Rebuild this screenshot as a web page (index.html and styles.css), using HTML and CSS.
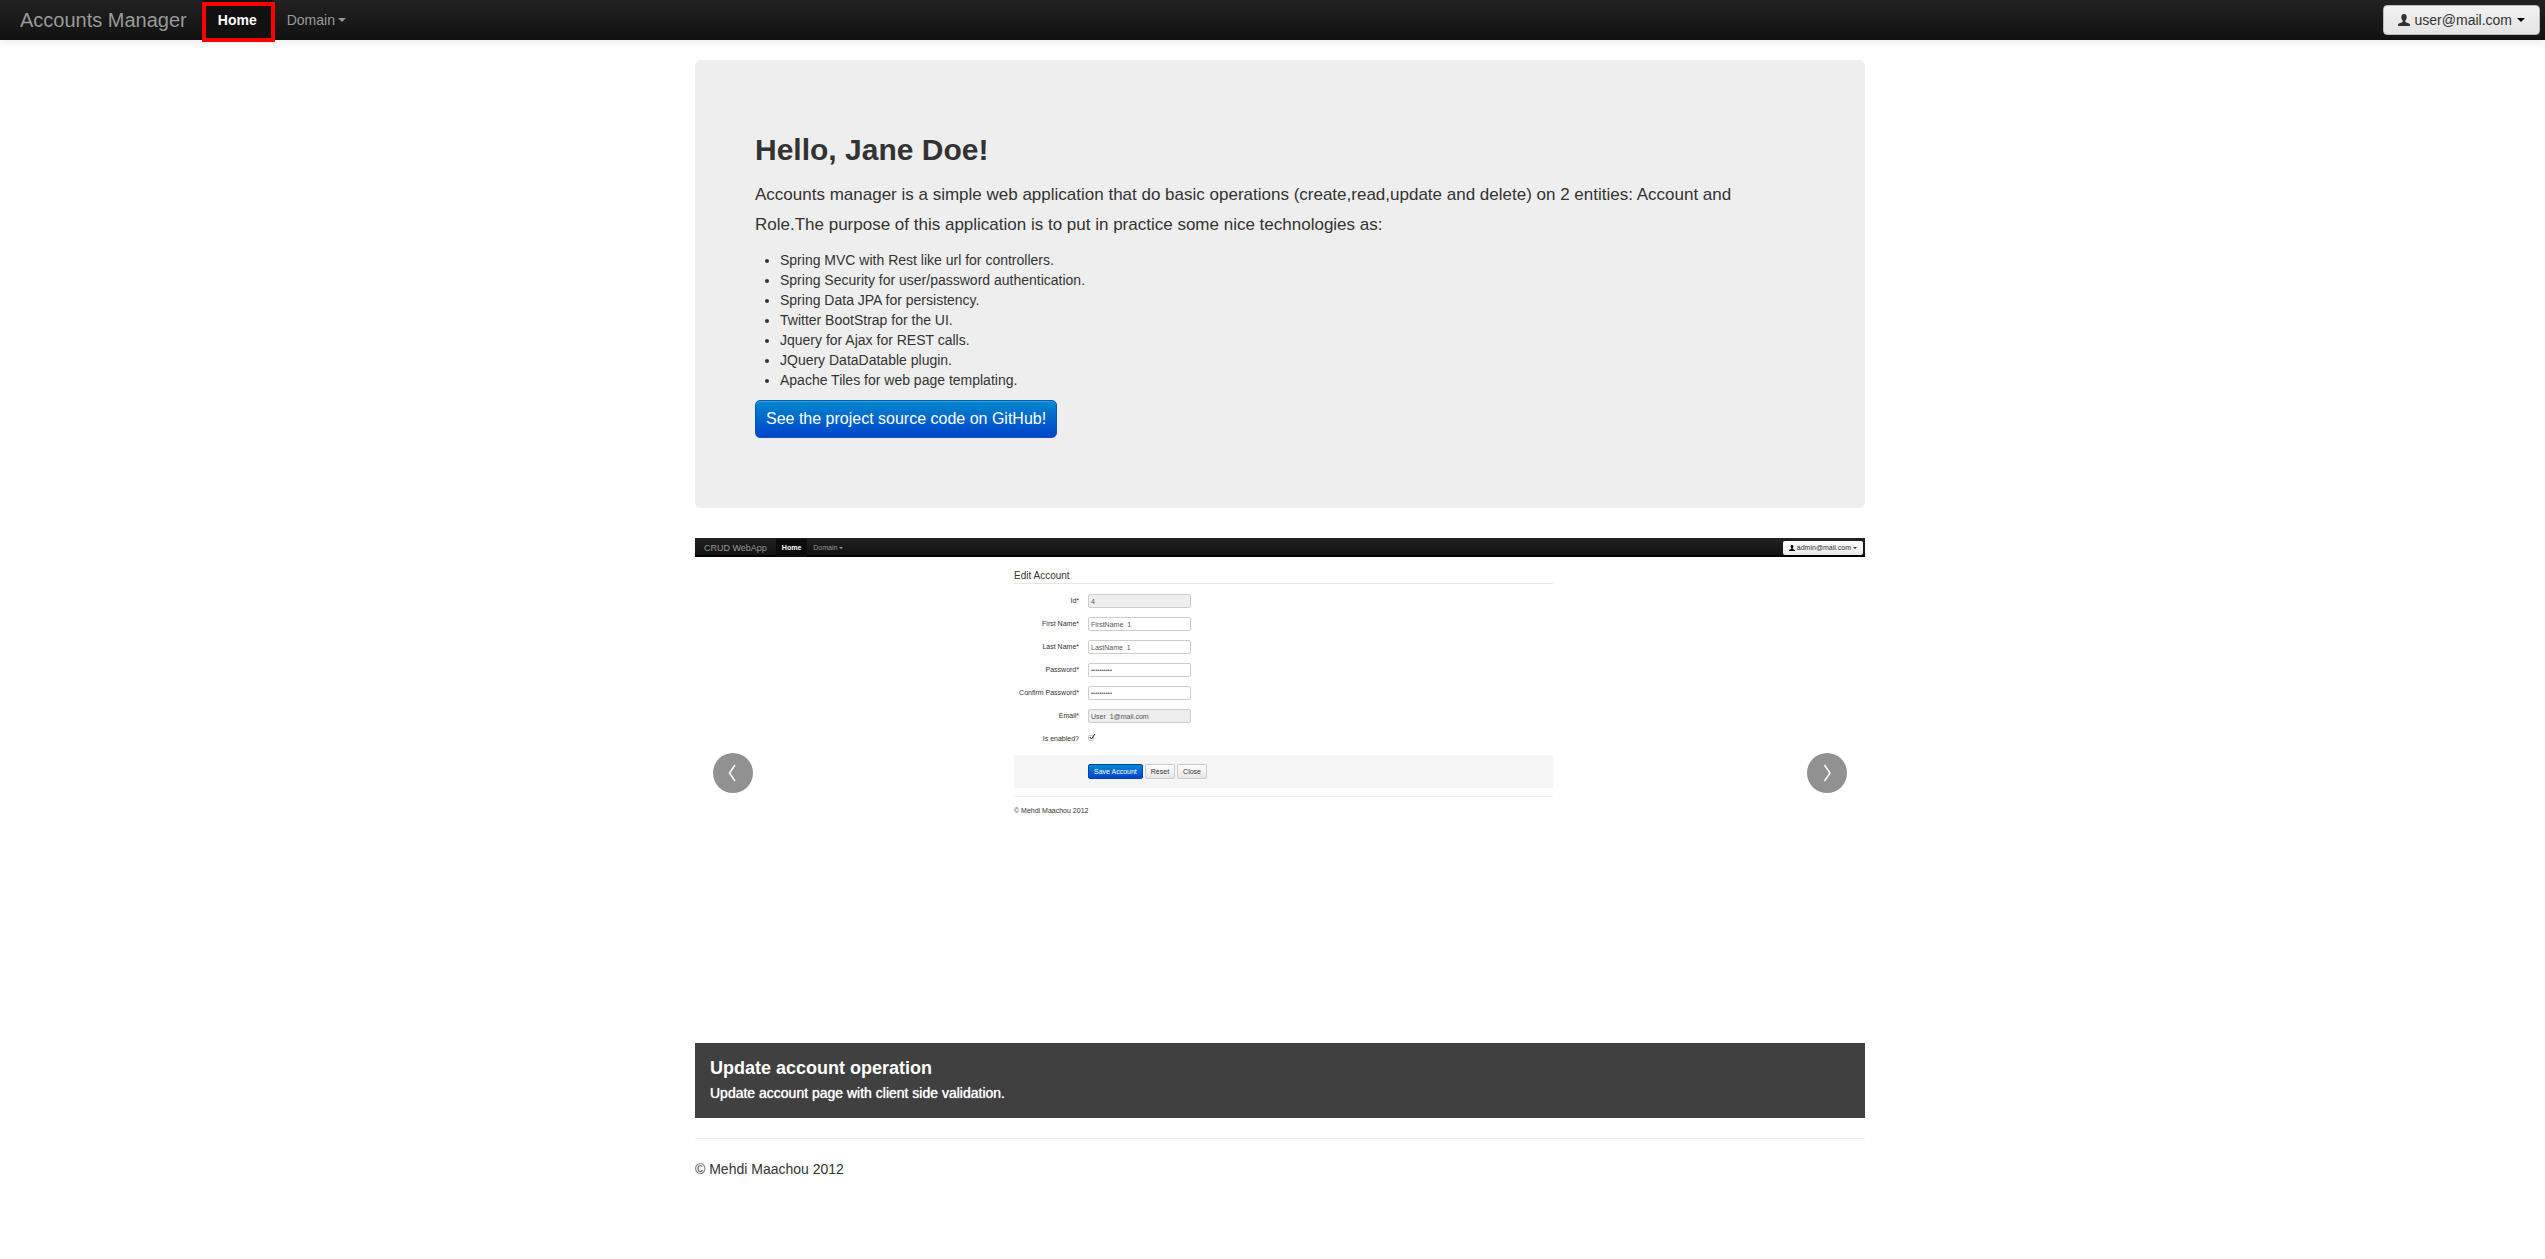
FILE: index.html
```html
<!DOCTYPE html>
<html lang="en">
<head>
<meta charset="utf-8">
<title>Accounts Manager</title>
<link rel="stylesheet" href="styles.css">
</head>
<body>
<svg width="0" height="0" class="sprite" aria-hidden="true">
  <symbol id="icon-user" viewBox="0 0 12 12"><path d="M6 0C4.200 0 3.300 1.200 3.300 2.900c0 1.500.5 2.800 1.400 3.600.2.900-.2 1.500-1 1.900L1 9.500C.300 9.800 0 10.300 0 11v1h12v-1c0-.7-.3-1.200-1-1.500L8.300 8.400c-.8-.4-1.200-1-1-1.900.9-.8 1.400-2.100 1.400-3.600C8.700 1.200 7.800 0 6 0z"/></symbol>
</svg>
<header class="navbar">
  <a class="brand" href="#">Accounts Manager</a>
  <nav class="nav">
    <a class="nav-link active" href="#">Home<span class="highlight"></span></a>
    <a class="nav-link" href="#">Domain<span class="caret"></span></a>
  </nav>
  <button class="btn user" type="button"><svg class="icon"><use href="#icon-user"/></svg>user@mail.com<span class="caret"></span></button>
</header>
<main class="page">
  <section class="hero">
    <h1>Hello, Jane Doe!</h1>
    <p class="lead">Accounts manager is a simple web application that do basic operations (create,read,update and delete) on 2 entities: Account and Role.The purpose of this application is to put in practice some nice technologies as:</p>
    <ul>
      <li>Spring MVC with Rest like url for controllers.</li>
      <li>Spring Security for user/password authentication.</li>
      <li>Spring Data JPA for persistency.</li>
      <li>Twitter BootStrap for the UI.</li>
      <li>Jquery for Ajax for REST calls.</li>
      <li>JQuery DataDatable plugin.</li>
      <li>Apache Tiles for web page templating.</li>
    </ul>
    <a class="btn-large" href="#">See the project source code on GitHub!</a>
  </section>
  <section class="carousel">
    <div class="slide">
      <div class="mini-bar">
        <a class="mini-brand" href="#">CRUD WebApp</a>
        <a class="mini-link active" href="#">Home</a>
        <a class="mini-link" href="#">Domain<span class="mini-caret"></span></a>
        <button class="mini-user" type="button"><svg class="mini-icon"><use href="#icon-user"/></svg>admin@mail.com<span class="mini-caret"></span></button>
      </div>
      <form class="mini-form">
        <h2>Edit Account</h2>
        <div class="row"><label for="id">Id*</label><input id="id" type="text" value="4" disabled></div>
        <div class="row"><label for="first">First Name*</label><input id="first" type="text" value="FirstName_1"></div>
        <div class="row"><label for="last">Last Name*</label><input id="last" type="text" value="LastName_1"></div>
        <div class="row"><label for="pass">Password*</label><input id="pass" type="password" value="password12"></div>
        <div class="row"><label for="confirm">Confirm Password*</label><input id="confirm" type="password" value="password12"></div>
        <div class="row"><label for="email">Email*</label><input id="email" type="text" value="User_1@mail.com" disabled></div>
        <div class="row"><label for="enabled">Is enabled?</label><span class="check"><input id="enabled" type="checkbox" checked><svg viewBox="0 0 8 8"><path d="M2 4l1.500 2L7 1"/></svg></span></div>
        <div class="actions">
          <button class="mini-btn primary" type="button">Save Account</button>
          <button class="mini-btn" type="button">Reset</button>
          <button class="mini-btn" type="button">Close</button>
        </div>
        <p class="mini-footer">© Mehdi Maachou 2012</p>
      </form>
    </div>
    <div class="caption">
      <h4>Update account operation</h4>
      <p>Update account page with client side validation.</p>
    </div>
    <button class="control prev" type="button" aria-label="Previous"><svg viewBox="0 0 40 40"><path d="M22 12l-5.500 8 5.500 8"/></svg></button>
    <button class="control next" type="button" aria-label="Next"><svg viewBox="0 0 40 40"><path d="M17.500 12l5.500 8-5.500 8"/></svg></button>
  </section>
  <footer class="footer">© Mehdi Maachou 2012</footer>
</main>
</body>
</html>
```
FILE: styles.css
```css
* { box-sizing: border-box; }
body {
  margin: 0;
  font: 14px/20px "Liberation Sans", Arial, sans-serif;
  color: #333;
  background: #fff;
}
a { text-decoration: none; }
button, input { font-family: inherit; }
h1, h2, h4, p, ul { margin: 0; }
.sprite { position: absolute; }

/* Top bar */
.navbar {
  display: flex;
  align-items: center;
  height: 40px;
  padding: 0 5px 0 20px;
  background: linear-gradient(#222, #111);
  box-shadow: 0 1px 10px rgba(0, 0, 0, .1);
}
.brand { font-size: 20px; color: #999; margin-right: 16px; }
.nav { display: flex; flex: 1; align-self: stretch; }
.nav-link {
  position: relative;
  display: flex;
  align-items: center;
  padding: 0 15px;
  color: #999;
}
.nav-link.active { color: #fff; background: #111; font-weight: bold; }
.highlight {
  position: absolute;
  inset: 2px -3px -2px -1px;
  border: 4px solid #f00;
}
.caret {
  border: 4px solid transparent;
  border-top-color: currentColor;
  border-bottom: 0;
  margin-left: 3px;
}
.btn {
  display: flex;
  align-items: center;
  height: 30px;
  padding: 0 14px;
  border: 1px solid #bbb;
  border-radius: 4px;
  font-size: 14px;
  color: #333;
  background: linear-gradient(#f2f2f2, #e4e4e4);
}
.user .caret { color: #000; margin-left: 5px; }
.icon { width: 12px; height: 12px; margin-right: 5px; fill: #333; }

/* Page column */
.page { width: 1185px; max-width: 100%; margin: 20px auto 0; padding-left: 15px; }
.hero {
  padding: 70px 60px;
  border-radius: 6px;
  background: #eee;
  margin-bottom: 30px;
}
.hero h1 { font-size: 30px; line-height: 40px; margin-bottom: 10px; }
.lead { max-width: 1020px; font-size: 17px; line-height: 30px; margin-bottom: 10px; }
.hero ul { padding-left: 25px; margin-bottom: 10px; }
.btn-large {
  display: inline-block;
  padding: 8px 10px;
  border: 1px solid #0358b8;
  border-radius: 5px;
  font-size: 16px;
  color: #fff;
  vertical-align: top;
  background: linear-gradient(#08c, #04c);
  box-shadow: inset 0 1px 0 rgba(255, 255, 255, .2);
}

/* Carousel */
.carousel { position: relative; display: flex; flex-direction: column; }
.slide { min-height: 505px; }
.caption { padding: 15px; color: #fff; background: #404040; }
.caption h4 { font-size: 18px; line-height: 20px; margin-bottom: 5px; }
.caption p { text-shadow: 0 0 1px #fff; }
.control {
  position: absolute;
  top: 215px;
  width: 40px;
  height: 40px;
  padding: 0;
  border: 0;
  border-radius: 50%;
  background: #919191;
}
.control svg { display: block; fill: none; stroke: #fff; stroke-width: 1.500; }
.prev { left: 18px; }
.next { right: 18px; }

/* Slide content */
.mini-bar {
  display: flex;
  align-items: center;
  height: 19px;
  padding: 0 2px 0 9px;
  font-size: 7px;
  background: linear-gradient(#222, #111 17px, #000 17px);
}
.mini-brand { font-size: 9px; color: #999; margin-right: 9px; }
.mini-link { display: flex; align-items: center; height: 18px; padding: 0 6px; color: #999; }
.mini-link.active { color: #fff; background: #0c0c0c; font-weight: bold; }
.mini-caret {
  border: 2px solid transparent;
  border-top-color: currentColor;
  border-bottom: 0;
  margin-left: 2px;
}
.mini-user {
  display: flex;
  align-items: center;
  height: 14px;
  margin-left: auto;
  padding: 0 6px;
  border: 0;
  border-radius: 2px;
  font-size: 7px;
  color: #333;
  background: linear-gradient(#fff, #e8e8e8);
}
.mini-icon { width: 6px; height: 6px; margin-right: 2px; }
.mini-form { width: 539px; margin: 0 0 0 319px; padding-top: 11px; font-size: 7px; line-height: 10px; }
.mini-form h2 {
  font-size: 10px;
  font-weight: normal;
  line-height: 15px;
  border-bottom: 1px solid #e5e5e5;
  margin-bottom: 10px;
}
.row { display: flex; align-items: center; gap: 9px; height: 14px; margin-bottom: 9px; }
.row label { width: 65px; text-align: right; }
.row input {
  width: 103px;
  height: 14px;
  margin: 0;
  padding: 0 2px;
  border: 1px solid #ccc;
  border-radius: 2px;
  font-size: 7px;
  color: #555;
  background: #fff;
}
.row input:disabled { background: #eee; }
.row input[type="password"] { font-size: 6px; }
.check { position: relative; width: 8px; height: 8px; }
.row input[type="checkbox"] {
  appearance: none;
  display: block;
  width: 6px;
  height: 6px;
  border-radius: 1px;
}
.check svg {
  position: absolute;
  inset: -2px 0 0;
  width: 8px;
  height: 8px;
  fill: none;
  stroke: #222;
  pointer-events: none;
}
.actions {
  display: flex;
  align-items: center;
  gap: 2px;
  height: 33px;
  padding-left: 74px;
  background: #f5f5f5;
}
.mini-btn {
  height: 15px;
  padding: 0 5px;
  border: 1px solid #ccc;
  border-radius: 2px;
  font-size: 7px;
  color: #333;
  background: linear-gradient(#fff, #e6e6e6);
}
.mini-btn.primary { border-color: #04a; color: #fff; background: linear-gradient(#08c, #04c); }
.mini-footer { border-top: 1px solid #eee; margin-top: 8px; padding-top: 9px; }

.footer { border-top: 1px solid #eee; margin-top: 20px; padding: 20px 0; }
```
